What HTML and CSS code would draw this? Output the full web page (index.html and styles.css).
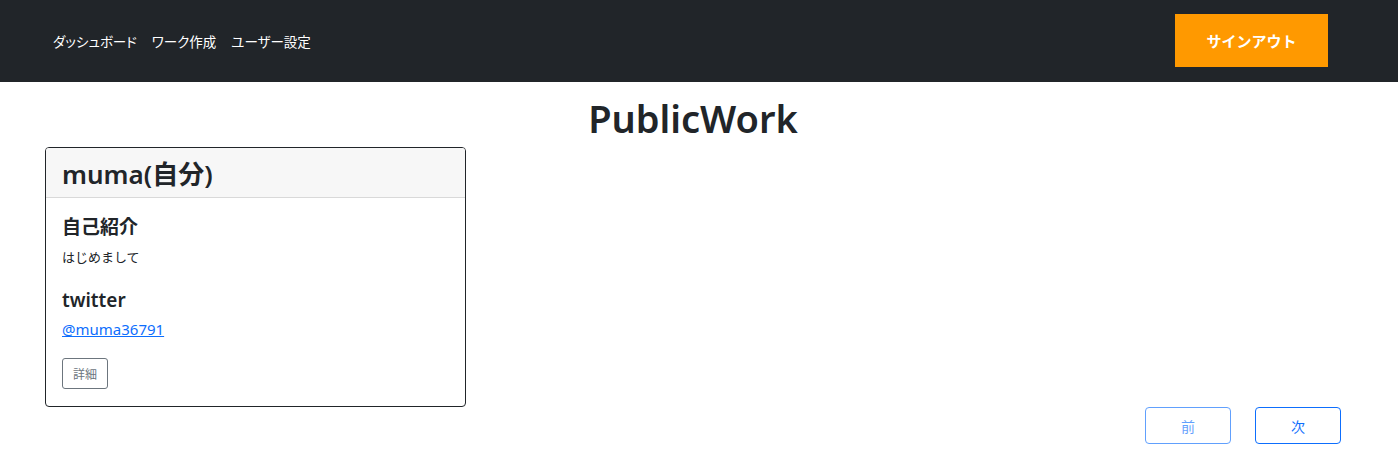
FILE: index.html
```html
<!DOCTYPE html>
<html lang="ja">
<head>
<meta charset="utf-8">
<link rel="stylesheet" href="styles.css">
</head>
<body>
<header class="navbar">
  <nav class="nav-links">
    <a href="#">ダッシュボード</a>
    <a href="#">ワーク作成</a>
    <a href="#">ユーザー設定</a>
  </nav>
  <button class="signout">サインアウト</button>
</header>
<main class="main">
  <h1 class="title">PublicWork</h1>
  <div class="cards">
    <div class="card">
      <div class="card-header">muma(自分)</div>
      <div class="card-body">
        <h5 class="label">自己紹介</h5>
        <p class="text">はじめまして</p>
        <h5 class="label label-tw">twitter</h5>
        <p class="text text-link"><a class="link" href="#">@muma36791</a></p>
        <button class="btn-detail">詳細</button>
      </div>
    </div>
  </div>
  <div class="pager">
    <button class="page-btn disabled">前</button>
    <button class="page-btn">次</button>
  </div>
</main>
</body>
</html>
```
FILE: styles.css
```css
* { box-sizing: border-box; }
body {
  margin: 0;
  font-family: "Noto Sans", "Open Sans", "Noto Sans CJK JP", sans-serif;
  color: #212529;
  background: #fff;
}
.navbar {
  height: 82px;
  background: #212529;
  display: flex;
  align-items: flex-start;
  justify-content: space-between;
  padding: 14px 70px 0 53px;
}
.nav-links {
  display: flex;
  gap: 15px;
  height: 53px;
  align-items: center;
}
.nav-links a {
  color: #fff;
  text-decoration: none;
  font-size: 13.5px;
  font-family: "Noto Sans CJK JP", sans-serif;
  font-feature-settings: "palt";
}
.signout {
  width: 153px;
  height: 53px;
  background: #ff9900;
  border: none;
  color: #fff;
  font-weight: bold;
  font-size: 15px;
  font-family: "Noto Sans CJK JP", sans-serif;
}
.main {
  padding: 0 45px;
}
.title {
  margin: 8px 0 0;
  padding-right: 12px;
  text-align: center;
  font-size: 38px;
  font-weight: 600;
  line-height: 56px;
}
.cards {
  margin-top: 1px;
}
.card {
  width: 421px;
  border: 1px solid #212529;
  border-radius: 4px;
  overflow: hidden;
}
.card-header {
  height: 50px;
  background: #f7f7f7;
  border-bottom: 1px solid #d9d9d9;
  padding: 0 16px;
  display: flex;
  align-items: center;
  font-size: 26px;
  font-weight: 600;
  font-family: "Noto Sans", "Noto Sans CJK JP", sans-serif;
}
.card-body {
  padding: 14px 16px 17px;
}
.label {
  margin: 0;
  font-size: 19px;
  font-weight: 600;
  line-height: 30px;
  font-family: "Noto Sans", "Noto Sans CJK JP", sans-serif;
}
.label-tw {
  margin-top: 18px;
}
.text {
  margin: 5px 0 0;
  font-size: 13px;
  line-height: 20px;
  font-family: "Noto Sans CJK JP", sans-serif;
}
.text-link {
  margin-top: 4px;
}
.link {
  color: #0d6efd;
  font-size: 15px;
  font-family: "Noto Sans", sans-serif;
}
.btn-detail {
  margin-top: 18px;
  width: 46px;
  height: 31px;
  border: 1px solid #6c757d;
  border-radius: 3px;
  background: #fff;
  color: #6c757d;
  font-size: 12px;
  font-family: "Noto Sans CJK JP", sans-serif;
  padding: 0;
}
.pager {
  display: flex;
  justify-content: flex-end;
  gap: 24px;
  padding-right: 12px;
}
.page-btn {
  width: 86px;
  height: 37px;
  border: 1px solid #0d6efd;
  border-radius: 4px;
  background: #fff;
  color: #0d6efd;
  font-size: 14px;
  font-family: "Noto Sans CJK JP", sans-serif;
}
.page-btn.disabled {
  opacity: 0.65;
}
```
